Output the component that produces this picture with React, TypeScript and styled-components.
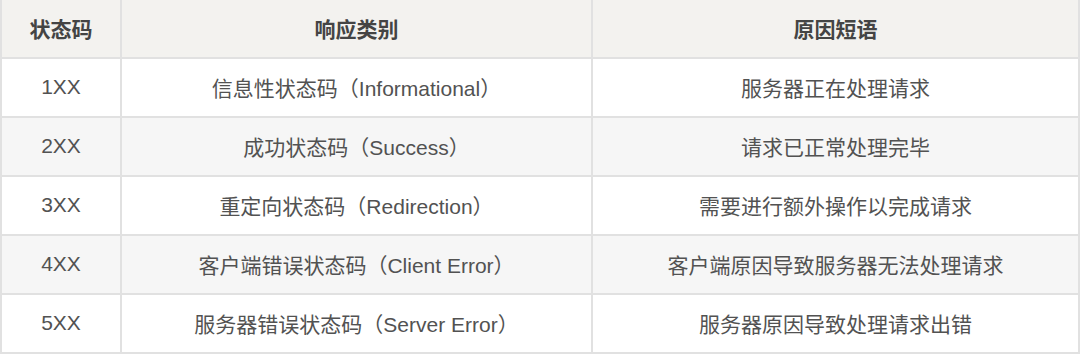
import React from "react";
import styled, { createGlobalStyle } from "styled-components";

const Global = createGlobalStyle`
  html, body { margin: 0; padding: 0; background: #ffffff; }
`;

const Table = styled.table`
  width: 1078px;
  border-collapse: collapse;
  table-layout: fixed;
  font-family: "Liberation Sans", "Noto Sans CJK SC", sans-serif;
  font-size: 21px;
  color: #525252;
  border-left: 2px solid #e1e1e1;
  border-right: 2px solid #e1e1e1;
  border-bottom: 2px solid #e1e1e1;
`;

const Col = styled.col<{ $w: number }>`
  width: ${(p) => p.$w}px;
`;

const HeadCell = styled.th`
  height: 55px;
  padding: 0 0 2px;
  background: #f3f2ef;
  color: #444444;
  font-weight: 700;
  text-align: center;
  vertical-align: middle;
  border: 2px solid #e1e1e1;
  border-top: none;
`;

const Row = styled.tr<{ $striped: boolean }>`
  background: ${(p) => (p.$striped ? "#f6f6f6" : "#ffffff")};
`;

const Cell = styled.td`
  height: 55px;
  padding: 0 0 2px;
  text-align: center;
  vertical-align: middle;
  border: 2px solid #e1e1e1;
`;

const rows = [
  ["1XX", "信息性状态码（Informational）", "服务器正在处理请求"],
  ["2XX", "成功状态码（Success）", "请求已正常处理完毕"],
  ["3XX", "重定向状态码（Redirection）", "需要进行额外操作以完成请求"],
  ["4XX", "客户端错误状态码（Client Error）", "客户端原因导致服务器无法处理请求"],
  ["5XX", "服务器错误状态码（Server Error）", "服务器原因导致处理请求出错"],
];

export default function App() {
  return (
    <>
      <Global />
      <Table>
        <colgroup>
          <Col $w={120} />
          <Col $w={471} />
          <Col $w={487} />
        </colgroup>
        <thead>
          <tr>
            <HeadCell>状态码</HeadCell>
            <HeadCell>响应类别</HeadCell>
            <HeadCell>原因短语</HeadCell>
          </tr>
        </thead>
        <tbody>
          {rows.map((r, i) => (
            <Row key={r[0]} $striped={i % 2 === 1}>
              <Cell>{r[0]}</Cell>
              <Cell>{r[1]}</Cell>
              <Cell>{r[2]}</Cell>
            </Row>
          ))}
        </tbody>
      </Table>
    </>
  );
}
